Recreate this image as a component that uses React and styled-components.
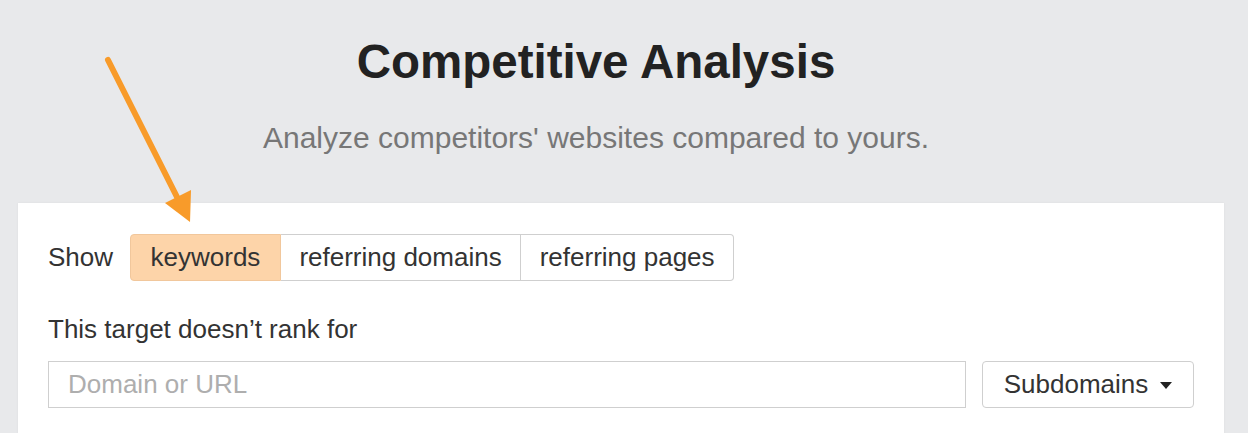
import React from "react";
import styled, { createGlobalStyle } from "styled-components";

const Global = createGlobalStyle`
  html, body { margin: 0; padding: 0; }
  body {
    background: #e8e9eb;
    font-family: "Liberation Sans", Arial, Helvetica, sans-serif;
    color: #333;
  }
`;

const Page = styled.div`
  position: relative;
  width: 1248px;
  height: 433px;
  overflow: hidden;
`;

const Header = styled.header`
  display: flex;
  flex-direction: column;
  align-items: center;
  margin-right: 56px;
  padding-top: 34px;
`;

const Title = styled.h1`
  margin: 0;
  font-size: 47.5px;
  line-height: 55px;
  font-weight: 700;
  color: #222;
`;

const Subtitle = styled.p`
  margin: 32px 0 0;
  font-size: 30px;
  line-height: 34px;
  color: #777;
`;

const Card = styled.section`
  margin: 48px 24px 0 18px;
  background: #fff;
  padding: 31px 30px 40px;
  box-shadow: 0 0 2px rgba(0, 0, 0, 0.06);
  display: flex;
  flex-direction: column;
`;

const ShowRow = styled.div`
  display: flex;
  align-items: center;
  gap: 17px;
`;

const Label = styled.span`
  font-size: 26px;
  color: #333;
`;

const Segments = styled.div`
  display: flex;
  height: 47px;
  box-sizing: border-box;
`;

const Segment = styled.button`
  font-family: inherit;
  font-size: 26px;
  color: #333;
  height: 47px;
  box-sizing: border-box;
  padding: 0 ${(p) => (p.$first ? "19.5px" : "18.5px")};
  margin: 0;
  background: ${(p) => (p.$active ? "#fdd4a9" : "#fff")};
  border: 1px solid ${(p) => (p.$active ? "#f1c79c" : "#cfcfcf")};
  border-left-width: ${(p) => (p.$first ? "1px" : "0")};
  border-radius: ${(p) =>
    p.$first ? "4px 0 0 4px" : p.$last ? "0 4px 4px 0" : "0"};
  cursor: pointer;
`;

const FieldLabel = styled.div`
  margin-top: 33px;
  font-size: 26px;
  line-height: 30px;
  color: #333;
`;

const InputRow = styled.div`
  display: flex;
  gap: 16px;
  margin-top: 17px;
`;

const Input = styled.input`
  flex: 1;
  height: 47px;
  box-sizing: border-box;
  border: 1px solid #cfcfcf;
  border-radius: 0;
  padding: 0 19px;
  font-family: inherit;
  font-size: 26px;
  color: #333;
  outline: none;
  &::placeholder { color: #aeaeae; }
`;

const Dropdown = styled.button`
  width: 212px;
  height: 47px;
  box-sizing: border-box;
  border: 1px solid #cfcfcf;
  border-radius: 4px;
  background: #fff;
  font-family: inherit;
  font-size: 26px;
  color: #333;
  display: flex;
  align-items: center;
  justify-content: center;
  gap: 12px;
  padding: 0;
  cursor: pointer;
`;

const Caret = styled.span`
  width: 0;
  height: 0;
  border-left: 6px solid transparent;
  border-right: 6px solid transparent;
  border-top: 7px solid #222;
  margin-top: 2px;
`;

const ArrowLayer = styled.svg`
  position: absolute;
  left: 0;
  top: 0;
  pointer-events: none;
`;

export default function App() {
  return (
    <Page>
      <Global />
      <Header>
        <Title>Competitive Analysis</Title>
        <Subtitle>Analyze competitors' websites compared to yours.</Subtitle>
      </Header>
      <Card>
        <ShowRow>
          <Label>Show</Label>
          <Segments>
            <Segment $active $first>keywords</Segment>
            <Segment>referring domains</Segment>
            <Segment $last>referring pages</Segment>
          </Segments>
        </ShowRow>
        <FieldLabel>This target doesn’t rank for</FieldLabel>
        <InputRow>
          <Input placeholder="Domain or URL" />
          <Dropdown>
            Subdomains <Caret />
          </Dropdown>
        </InputRow>
      </Card>
      <ArrowLayer width="1248" height="433" viewBox="0 0 1248 433">
        <line
          x1="108"
          y1="60"
          x2="180"
          y2="203"
          stroke="#f89b2a"
          strokeWidth="6"
          strokeLinecap="round"
        />
        <polygon points="165,203 191,190 190,222" fill="#f89b2a" />
      </ArrowLayer>
    </Page>
  );
}
